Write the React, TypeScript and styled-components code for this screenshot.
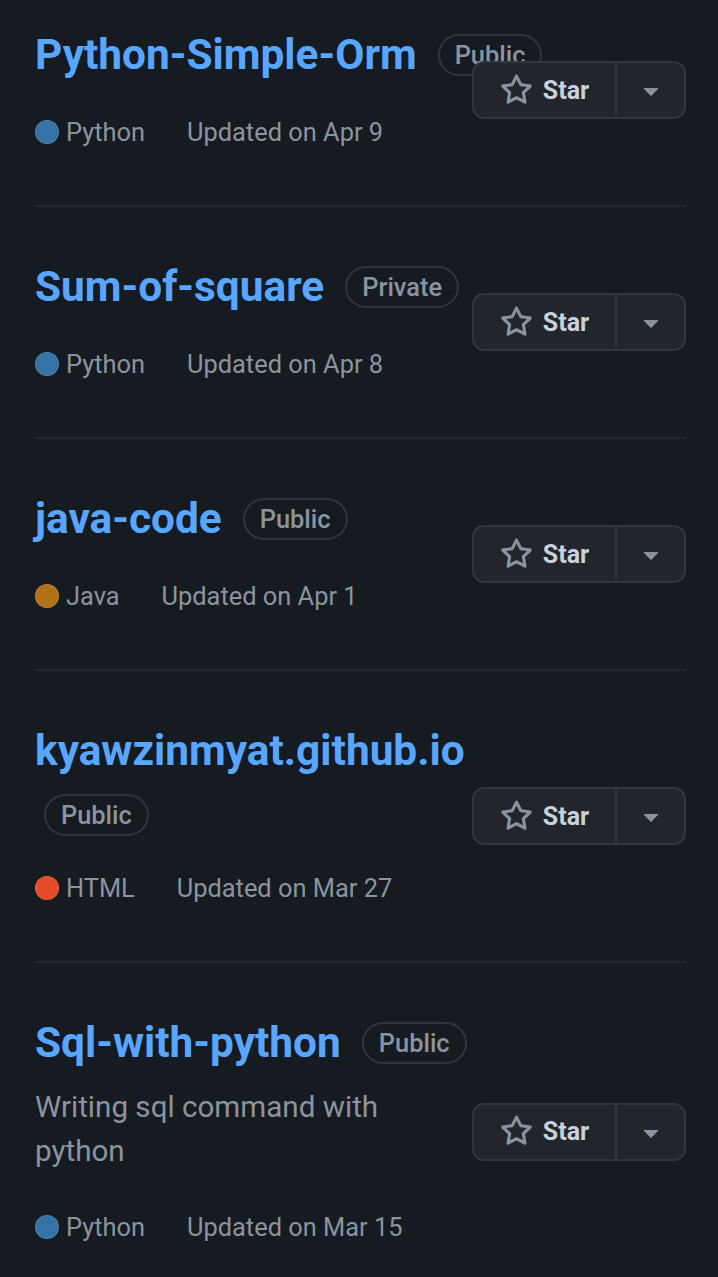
import React from "react";
import styled, { createGlobalStyle } from "styled-components";

const Global = createGlobalStyle`
  html, body { margin: 0; padding: 0; background: #161b22; }
  body { font-family: Roboto, "Noto Sans", "Liberation Sans", sans-serif; }
`;

const Page = styled.div`
  background: #161b22;
  min-height: 1277px;
  padding: 0 32px 0 35px;
  box-sizing: border-box;
  overflow: hidden;
`;

const Item = styled.div`
  display: flex;
  align-items: center;
  padding: 55px 0 55px;
  border-bottom: 2px solid #21262d;
  &:first-child { padding-top: 30px; }
  &:last-child { border-bottom: none; }
`;

const Main = styled.div`
  width: 530px;
  flex: none;
`;

const TitleRow = styled.div`
  display: flex;
  flex-wrap: wrap;
  align-items: center;
  column-gap: 12px;
  row-gap: 18px;
`;

const Title = styled.a`
  color: #58a6ff;
  font-size: 42.4px;
  font-weight: 700;
  line-height: 50px;
  text-decoration: none;
  white-space: nowrap;
`;

const Badge = styled.span`
  display: inline-flex;
  align-items: center;
  height: 42px;
  margin-left: 9px;
  box-sizing: border-box;
  padding: 0 15px;
  border: 2px solid #30363d;
  border-radius: 21px;
  color: #8b949e;
  font-size: 25.4px;
  font-weight: 500;
  white-space: nowrap;
`;

const Description = styled.p`
  margin: 17px 0 0;
  color: #8b949e;
  font-size: 29.6px;
  line-height: 44px;
  max-width: 380px;
`;

const Meta = styled.div<{ $afterDesc?: boolean }>`
  display: flex;
  align-items: center;
  margin-top: ${(p) => (p.$afterDesc ? 36 : 34)}px;
  color: #8b949e;
  font-size: 25.4px;
  line-height: 36px;
`;

const Lang = styled.span`
  display: inline-flex;
  align-items: center;
  gap: 7px;
  margin-right: 42px;
`;

const Dot = styled.span<{ $c: string }>`
  width: 24px;
  height: 24px;
  border-radius: 50%;
  background: ${(p) => p.$c};
  border: 1px solid rgba(255,255,255,0.12);
  box-sizing: border-box;
`;

const Side = styled.div`
  flex: 1;
  min-width: 0;
  display: flex;
  justify-content: flex-end;
`;

const StarGroup = styled.div`
  display: flex;
  flex: none;
  width: 214px;
  height: 58px;
  box-sizing: border-box;
  border: 2px solid #30363d;
  border-radius: 12px;
  background: #21262d;
`;

const StarBtn = styled.button`
  all: unset;
  display: flex;
  align-items: center;
  justify-content: center;
  gap: 10px;
  width: 141px;
  border-right: 2px solid #30363d;
  color: #c9d1d9;
  font-family: Roboto, "Noto Sans", sans-serif;
  font-size: 25px;
  font-weight: 700;
  svg { color: #8b949e; }
`;

const CaretBtn = styled.button`
  all: unset;
  flex: 1;
  display: flex;
  align-items: center;
  justify-content: center;
  color: #8b949e;
`;

const StarIcon = () => (
  <svg width="33" height="33" viewBox="0 0 16 16" fill="currentColor">
    <path d="M8 .25a.75.75 0 0 1 .673.418l1.882 3.815 4.21.612a.75.75 0 0 1 .416 1.279l-3.046 2.97.719 4.192a.751.751 0 0 1-1.088.791L8 12.347l-3.766 1.98a.75.75 0 0 1-1.088-.79l.72-4.194L.818 6.374a.75.75 0 0 1 .416-1.28l4.21-.611L7.327.668A.75.75 0 0 1 8 .25Zm0 2.445L6.615 5.5a.75.75 0 0 1-.564.41l-3.097.45 2.24 2.184a.75.75 0 0 1 .216.664l-.528 3.084 2.769-1.456a.75.75 0 0 1 .698 0l2.77 1.456-.53-3.084a.75.75 0 0 1 .216-.664l2.240-2.183-3.096-.45a.75.75 0 0 1-.564-.41L8 2.694Z" />
  </svg>
);

const Caret = () => (
  <svg width="32" height="32" viewBox="0 0 16 16" fill="currentColor">
    <path d="m4.427 7.427 3.396 3.396a.25.25 0 0 0 .354 0l3.396-3.396A.25.25 0 0 0 11.396 7H4.604a.25.25 0 0 0-.177.427Z" />
  </svg>
);

type Repo = {
  name: string;
  vis: string;
  desc?: string;
  lang: string;
  color: string;
  updated: string;
};

const repos: Repo[] = [
  { name: "Python-Simple-Orm", vis: "Public", lang: "Python", color: "#3572A5", updated: "Apr 9" },
  { name: "Sum-of-square", vis: "Private", lang: "Python", color: "#3572A5", updated: "Apr 8" },
  { name: "java-code", vis: "Public", lang: "Java", color: "#b07219", updated: "Apr 1" },
  { name: "kyawzinmyat.github.io", vis: "Public", lang: "HTML", color: "#e34c26", updated: "Mar 27" },
  { name: "Sql-with-python", vis: "Public", desc: "Writing sql command with python", lang: "Python", color: "#3572A5", updated: "Mar 15" },
];

export default function App() {
  return (
    <>
      <Global />
      <Page>
        {repos.map((r) => (
          <Item key={r.name}>
            <Main>
              <TitleRow>
                <Title href="#">{r.name}</Title>
                <Badge>{r.vis}</Badge>
              </TitleRow>
              {r.desc && <Description>{r.desc}</Description>}
              <Meta $afterDesc={!!r.desc}>
                <Lang>
                  <Dot $c={r.color} />
                  {r.lang}
                </Lang>
                <span>Updated on {r.updated}</span>
              </Meta>
            </Main>
            <Side>
              <StarGroup>
                <StarBtn>
                  <StarIcon />
                  Star
                </StarBtn>
                <CaretBtn>
                  <Caret />
                </CaretBtn>
              </StarGroup>
            </Side>
          </Item>
        ))}
      </Page>
    </>
  );
}
